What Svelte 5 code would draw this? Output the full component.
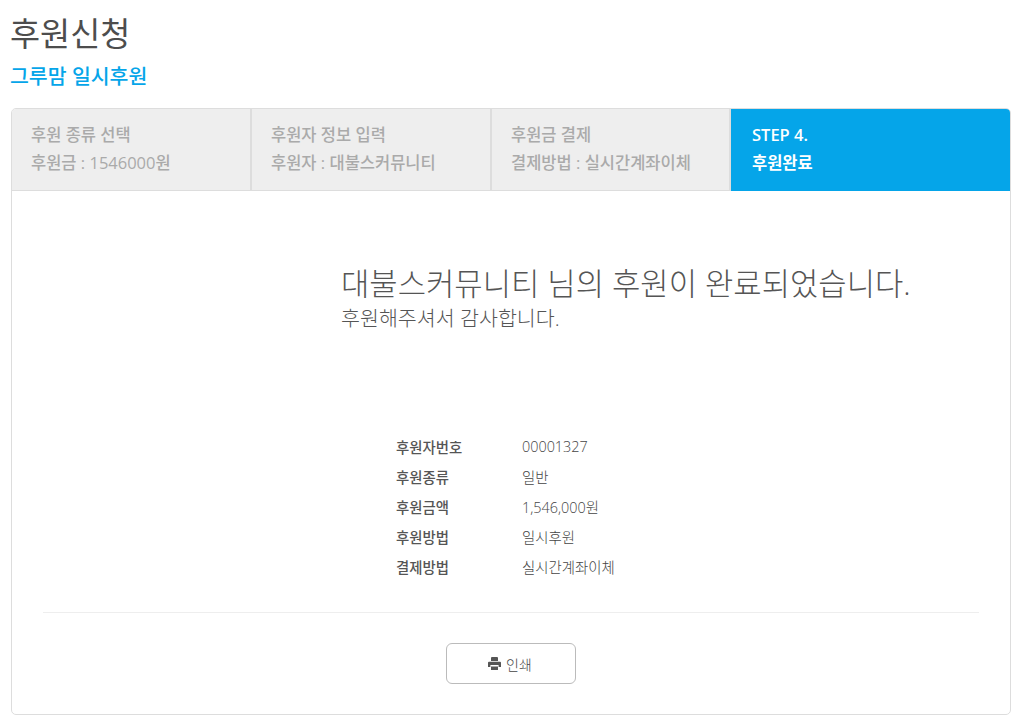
<script>
  const steps = [
    { title: '후원 종류 선택', sub: '후원금 : 1546000원' },
    { title: '후원자 정보 입력', sub: '후원자 : 대불스커뮤니티' },
    { title: '후원금 결제', sub: '결제방법 : 실시간계좌이체' },
    { title: 'STEP 4.', sub: '후원완료', active: true }
  ]

  const details = [
    ['후원자번호', '00001327'],
    ['후원종류', '일반'],
    ['후원금액', '1,546,000원'],
    ['후원방법', '일시후원'],
    ['결제방법', '실시간계좌이체']
  ]
</script>

<div class="page">
  <h1>후원신청</h1>
  <h2>그루맘 일시후원</h2>

  <div class="card">
    <ol class="steps">
      {#each steps as step}
        <li class:active={step.active}>
          <span>{step.title}</span>
          <span>{step.sub}</span>
        </li>
      {/each}
    </ol>

    <div class="message">
      <p class="big">대불스커뮤니티 님의 후원이 완료되었습니다.</p>
      <p class="thanks">후원해주셔서 감사합니다.</p>
    </div>

    <dl class="details">
      {#each details as [label, value]}
        <div class="row">
          <dt>{label}</dt>
          <dd>{value}</dd>
        </div>
      {/each}
    </dl>

    <div class="actions">
      <button type="button">
        <svg width="13" height="13" viewBox="0 0 13 13" aria-hidden="true">
          <path fill="#555" d="M3 1a1 1 0 0 1 1-1h5a1 1 0 0 1 1 1v3H3zM1 4.8h11a1 1 0 0 1 1 1V10h-2.4V8H2.4v2H0V5.8a1 1 0 0 1 1-1zM3 9.6h7V13H3z"/>
        </svg>
        인쇄
      </button>
    </div>
  </div>
</div>

<style>
  :global(body) {
    margin: 0;
    background: #fff;
    font-family: "Open Sans", "Noto Sans CJK KR", sans-serif;
    color: #555;
  }

  .page {
    padding: 0 9px 0 11px;
  }

  h1 {
    margin: 0 0 0 -1px;
    padding-top: 13px;
    font-size: 32.7px;
    line-height: 42px;
    font-weight: 400;
    color: #4d4d4d;
  }

  h2 {
    margin: 0 0 0 -1px;
    padding-top: 7px;
    font-size: 20.5px;
    line-height: 28px;
    font-weight: 500;
    color: #05a5e9;
  }

  .card {
    margin-top: 18px;
    height: 607px;
    box-sizing: border-box;
    border: 1px solid #ddd;
    border-radius: 5px;
    overflow: hidden;
  }

  .steps {
    display: grid;
    grid-template-columns: 241px 240px 239px 1fr;
    margin: -1px -1px 0;
    padding: 0;
    list-style: none;
    height: 83px;
  }

  .steps li {
    display: flex;
    flex-direction: column;
    gap: 4px;
    padding: 14px 0 0 19px;
    background: #eee;
    border: 1px solid #ddd;
    border-width: 1px 2px 1px 0;
    font-size: 16.5px;
    font-weight: 500;
    line-height: 24px;
    color: #aaa;
  }

  .steps li:first-child {
    border-left-width: 1px;
    padding-left: 19px;
  }

  .steps li.active {
    background: #05a5e9;
    border: 0;
    padding: 15px 0 0 21px;
    font-weight: 600;
    color: #fff;
  }

  .message {
    margin: 72px 0 0 329px;
  }

  .message p {
    margin: 0;
    font-weight: 300;
    white-space: nowrap;
  }

  .big {
    font-size: 30.8px;
    line-height: 40px;
  }

  .thanks {
    font-size: 20.6px;
    line-height: 30px;
  }

  .details {
    margin: 98px 0 0 384px;
  }

  .row {
    display: flex;
    height: 30px;
    align-items: center;
    font-size: 14.4px;
  }

  dt {
    width: 126px;
    font-weight: 500;
  }

  dd {
    margin: 0;
    font-weight: 300;
    color: #444;
  }

  .actions {
    margin: 31px 31px 0;
    padding-top: 30px;
    border-top: 1px solid #eee;
    display: flex;
    justify-content: center;
  }

  button {
    display: flex;
    align-items: center;
    justify-content: center;
    gap: 5px;
    width: 130px;
    height: 41px;
    padding: 0 2px 0 0;
    background: #fff;
    border: 1px solid #bbb;
    border-radius: 6px;
    font: inherit;
    font-size: 14px;
    font-weight: 300;
    color: #444;
  }
</style>
